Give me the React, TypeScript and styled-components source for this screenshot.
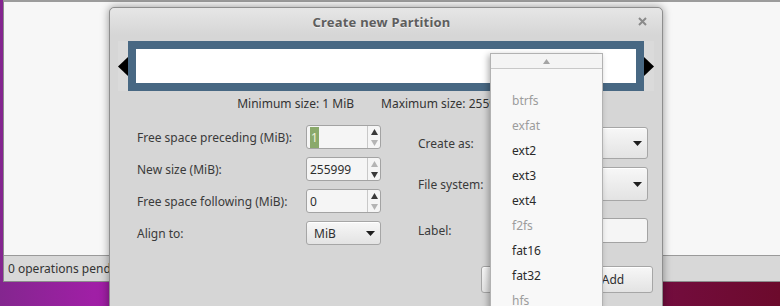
import styled, { createGlobalStyle } from 'styled-components'

const GlobalStyle = createGlobalStyle`
  html, body { margin: 0; padding: 0; }
  body {
    font-family: "Noto Sans", "DejaVu Sans", sans-serif;
    font-size: 12px;
    color: #3c3c3c;
  }
  * { box-sizing: border-box; }
`

const Desktop = styled.div`
  position: relative;
  width: 780px;
  height: 306px;
  overflow: hidden;
  padding-left: 3px;
  background: linear-gradient(90deg, #84268f 0%, #a01fa6 12%, #86136e 45%, #6c0a2c 100%);
`

const MainWindow = styled.div`
  display: flex;
  flex-direction: column;
  height: 282px;
  border-top: 2px solid #9c9c9c;
  border-left: 1px solid #8c8c8c;
  border-bottom: 1px solid #8c8c8c;
  background: #d8d8d8;
`

const WindowContent = styled.div`
  flex: 1;
  background: #f7f7f7;
  border-bottom: 1px solid #9a9a9a;
`

const StatusBar = styled.div`
  height: 25px;
  display: flex;
  align-items: center;
  padding-left: 4px;
  color: #333;
`

const Dialog = styled.div`
  position: absolute;
  left: 109px;
  top: 7px;
  width: 554px;
  height: 320px;
  border: 1px solid #8e8e8e;
  border-radius: 5px 5px 0 0;
  background: #d6d6d6;
  box-shadow: 0 0 9px rgba(0, 0, 0, 0.4);
  display: flex;
  flex-direction: column;
`

const TitleBar = styled.div`
  height: 27px;
  display: grid;
  grid-template-columns: 1fr auto 1fr;
  align-items: center;
  padding-right: 15px;
  border-radius: 5px 5px 0 0;
  background: linear-gradient(#e6e6e6, #d6d6d6);
`

const Title = styled.div`
  grid-column: 2;
  font-size: 13px;
  font-weight: bold;
  letter-spacing: 0.2px;
  color: #5e5e5e;
  margin-left: 6px;
  text-shadow: 0 1px 0 rgba(255, 255, 255, 0.6);
`

const Close = styled.svg`
  grid-column: 3;
  justify-self: end;
`

const Body = styled.div`
  display: flex;
  flex-direction: column;
  padding: 6px 8px 0 8px;
`

const PartitionRow = styled.div`
  display: flex;
  height: 50px;
`

const ArrowPanel = styled.div`
  width: 10px;
  display: flex;
  align-items: center;
  justify-content: center;
  background: #dadada;
`

const PartitionFrame = styled.div`
  flex: 1;
  border: 8px solid #486883;
  background: #ffffff;
`

const SizeInfo = styled.div`
  display: flex;
  justify-content: center;
  gap: 27px;
  margin-top: 6px;
  line-height: 14px;
  color: #333;
`

const Form = styled.div`
  display: flex;
  align-items: flex-start;
  margin-top: 14px;
  padding-left: 19px;
`

const LeftGrid = styled.div`
  display: grid;
  grid-template-columns: 169px 75px;
  grid-auto-rows: 24px;
  row-gap: 8px;
  align-items: center;
`

const RightGrid = styled.div`
  display: grid;
  grid-template-columns: 82px 148px;
  grid-template-rows: 32px 34px 34px;
  row-gap: 8px;
  align-items: center;
  margin-left: 37px;
  margin-top: 2px;
`

const Label = styled.div<{ $end?: boolean }>`
  color: #3a3a3a;
  white-space: nowrap;
  ${p => (p.$end ? 'align-self: end; line-height: 25px;' : '')}
`

const SpinBox = styled.div`
  display: flex;
  height: 24px;
  border: 1px solid #a3a3a3;
  border-radius: 3px;
  background: #f5f5f5;
  overflow: hidden;
`

const SpinValue = styled.div`
  flex: 1;
  display: flex;
  align-items: center;
  padding-left: 3px;
  color: #2e2e2e;
`

const Selected = styled.span`
  background: #8aa96b;
  color: #eef2dc;
  padding: 2px 1px;
`

const SpinButtons = styled.div`
  width: 13px;
  border-left: 1px solid #c8c8c8;
  display: flex;
  flex-direction: column;
  align-items: center;
  justify-content: center;
  gap: 5px;
`

const Combo = styled.div<{ $h: number }>`
  display: flex;
  align-items: center;
  justify-content: space-between;
  height: ${p => p.$h}px;
  padding: 0 5px 0 7px;
  border: 1px solid #a6a6a6;
  border-radius: 3px;
  background: linear-gradient(#f7f7f7, #e3e3e3);
  box-shadow: inset 0 1px 0 #ffffff;
  color: #2e2e2e;
`

const Entry = styled.div`
  align-self: end;
  height: 25px;
  border: 1px solid #a3a3a3;
  border-radius: 3px;
  background: #f5f5f5;
`

const ButtonRow = styled.div`
  display: flex;
  justify-content: flex-end;
  gap: 12px;
  margin-top: 21px;
  padding-right: 1px;
`

const PushButton = styled.div`
  width: 80px;
  height: 27px;
  display: flex;
  align-items: center;
  justify-content: center;
  border: 1px solid #a6a6a6;
  border-radius: 3px;
  background: linear-gradient(#f7f7f7, #e3e3e3);
  box-shadow: inset 0 1px 0 #ffffff;
  color: #2e2e2e;
`

const Menu = styled.div`
  position: absolute;
  left: 490px;
  top: 53px;
  width: 113px;
  height: 270px;
  border: 1px solid #b2b2b2;
  background: #f8f8f8;
  box-shadow: -2px 2px 6px rgba(0, 0, 0, 0.3);
`

const ScrollArrow = styled.div`
  height: 15px;
  display: flex;
  align-items: center;
  justify-content: center;
  border-bottom: 1px solid #c8c8c8;
  background: #f4f4f4;
`

const MenuList = styled.div`
  padding-top: 19px;
`

const MenuItem = styled.div<{ $disabled?: boolean }>`
  height: 25px;
  display: flex;
  align-items: center;
  padding-left: 21px;
  color: ${p => (p.$disabled ? '#9c9c9c' : '#2a2a2a')};
`

const Tri = ({ dir, color, w, h }: { dir: 'up' | 'down' | 'left' | 'right'; color: string; w: number; h: number }) => {
  const pts = {
    up: `0,${h} ${w / 2},0 ${w},${h}`,
    down: `0,0 ${w},0 ${w / 2},${h}`,
    left: `${w},0 0,${h / 2} ${w},${h}`,
    right: `0,0 ${w},${h / 2} 0,${h}`,
  }[dir]
  return (
    <svg width={w} height={h} viewBox={`0 0 ${w} ${h}`}>
      <polygon points={pts} fill={color} />
    </svg>
  )
}

const Spin = ({ value, selected, up, down }: { value: string; selected?: boolean; up: boolean; down: boolean }) => (
  <SpinBox>
    <SpinValue>{selected ? <Selected>{value}</Selected> : value}</SpinValue>
    <SpinButtons>
      <Tri dir="up" w={7} h={6} color={up ? '#3a3a3a' : '#b4b4b4'} />
      <Tri dir="down" w={7} h={6} color={down ? '#3a3a3a' : '#b4b4b4'} />
    </SpinButtons>
  </SpinBox>
)

const filesystems: [string, boolean][] = [
  ['btrfs', true],
  ['exfat', true],
  ['ext2', false],
  ['ext3', false],
  ['ext4', false],
  ['f2fs', true],
  ['fat16', false],
  ['fat32', false],
  ['hfs', true],
]

const ComboArrow = () => <Tri dir="down" w={9} h={5} color="#1e1e1e" />

export default function App() {
  return (
    <>
      <GlobalStyle />
      <Desktop>
        <MainWindow>
          <WindowContent />
          <StatusBar>0 operations pending</StatusBar>
        </MainWindow>

        <Dialog>
          <TitleBar>
            <Title>Create new Partition</Title>
            <Close width="9" height="9" viewBox="0 0 9 9">
              <path d="M1 1 L8 8 M8 1 L1 8" stroke="#8a8a8a" strokeWidth="2" />
            </Close>
          </TitleBar>
          <Body>
            <PartitionRow>
              <ArrowPanel>
                <Tri dir="left" w={10} h={19} color="#000" />
              </ArrowPanel>
              <PartitionFrame />
              <ArrowPanel>
                <Tri dir="right" w={10} h={19} color="#000" />
              </ArrowPanel>
            </PartitionRow>
            <SizeInfo>
              <span>Minimum size: 1 MiB</span>
              <span>Maximum size: 255999 MiB</span>
            </SizeInfo>
            <Form>
              <LeftGrid>
                <Label>Free space preceding (MiB):</Label>
                <Spin value="1" selected up down={false} />
                <Label>New size (MiB):</Label>
                <Spin value="255999" up={false} down />
                <Label>Free space following (MiB):</Label>
                <Spin value="0" up down={false} />
                <Label>Align to:</Label>
                <Combo $h={24}>
                  MiB
                  <ComboArrow />
                </Combo>
              </LeftGrid>
              <RightGrid>
                <Label>Create as:</Label>
                <Combo $h={32}>
                  <span />
                  <ComboArrow />
                </Combo>
                <Label>File system:</Label>
                <Combo $h={34}>
                  <span />
                  <ComboArrow />
                </Combo>
                <Label $end>Label:</Label>
                <Entry />
              </RightGrid>
            </Form>
            <ButtonRow>
              <PushButton />
              <PushButton>Add</PushButton>
            </ButtonRow>
          </Body>
        </Dialog>

        <Menu>
          <ScrollArrow>
            <Tri dir="up" w={7} h={5} color="#a4a4a4" />
          </ScrollArrow>
          <MenuList>
            {filesystems.map(([name, disabled]) => (
              <MenuItem key={name} $disabled={disabled}>
                {name}
              </MenuItem>
            ))}
          </MenuList>
        </Menu>
      </Desktop>
    </>
  )
}
